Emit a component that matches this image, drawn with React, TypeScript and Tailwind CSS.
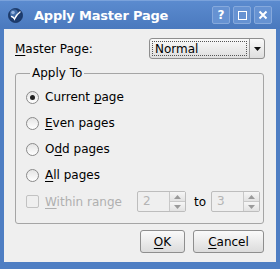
import { useState } from 'react';

const FONT = { fontFamily: '"DejaVu Sans", "Liberation Sans", sans-serif' };

function U({ children }: { children: string }) {
  return <span className="underline underline-offset-2">{children}</span>;
}

function Radio({ checked }: { checked: boolean }) {
  return (
    <span className="w-[13px] h-[13px] rounded-full border border-[#8a8a8a] bg-gradient-to-b from-[#e4e4e4] to-white flex items-center justify-center shrink-0">
      {checked && <span className="w-[5px] h-[5px] rounded-full bg-[#202020]" />}
    </span>
  );
}

function SpinBox({ value }: { value: string }) {
  return (
    <div className="w-[49px] h-[21px] border border-[#bdbdbd] rounded-[2px] bg-[#efefef] flex">
      <div className="flex-1 text-[12px] leading-[19px] text-[#b4b4b4] pl-[5px]">{value}</div>
      <div className="w-[16px] border-l border-[#c8c8c8] flex flex-col">
        <div className="flex-1 flex items-center justify-center border-b border-[#c8c8c8] bg-gradient-to-b from-[#f6f6f6] to-[#e2e2e2]">
          <svg width="7" height="4" viewBox="0 0 7 4"><path d="M0 4 L3.5 0 L7 4 Z" fill="#9a9a9a" /></svg>
        </div>
        <div className="flex-1 flex items-center justify-center bg-gradient-to-b from-[#f6f6f6] to-[#e2e2e2]">
          <svg width="7" height="4" viewBox="0 0 7 4"><path d="M0 0 L3.5 4 L7 0 Z" fill="#9a9a9a" /></svg>
        </div>
      </div>
    </div>
  );
}

export default function App() {
  const [choice, setChoice] = useState(0);
  const options: [string, string, string][] = [
    ['Current ', 'p', 'age'],
    ['', 'E', 'ven pages'],
    ['O', 'd', 'd pages'],
    ['', 'A', 'll pages'],
  ];

  return (
    <div className="w-[280px] h-[269px] bg-[#4e7ec3] flex flex-col text-black" style={FONT}>
      {/* Title bar */}
      <div className="h-[29px] shrink-0 flex items-center pl-[8px] pr-[8px] bg-gradient-to-b from-[#5b8bcf] to-[#4a79be] border-t border-[#7aa2db]">
        <svg width="15" height="15" viewBox="0 0 15 15" className="shrink-0">
          <circle cx="7.5" cy="7.5" r="7" fill="#1d3d70" stroke="#16305a" strokeWidth="0.8" />
          <circle cx="6" cy="5.5" r="4" fill="#4f7fbf" opacity="0.7" />
          <circle cx="5" cy="4.5" r="1.8" fill="#a9c6ee" opacity="0.8" />
          <path d="M3.5 8.5 Q5.5 9 6.5 11 Q8.5 6.5 12 4" stroke="#ffffff" strokeWidth="1.4" fill="none" strokeLinecap="round" />
        </svg>
        <span className="ml-[11px] text-white font-bold text-[13px] leading-none tracking-[-0.2px]">Apply Master Page</span>
        <div className="ml-auto flex gap-[3px]">
          {['?', 'max', 'x'].map(k => (
            <div key={k} className="w-[18px] h-[18px] rounded-[2px] border border-[#86a9dc] bg-[#6692d2] flex items-center justify-center text-white">
              {k === '?' && <span className="font-bold text-[12px] leading-none">?</span>}
              {k === 'max' && <span className="w-[9px] h-[9px] border-[1.5px] border-white" />}
              {k === 'x' && (
                <svg width="10" height="10" viewBox="0 0 10 10"><path d="M1.5 1.5 L8.5 8.5 M8.5 1.5 L1.5 8.5" stroke="#fff" strokeWidth="2" /></svg>
              )}
            </div>
          ))}
        </div>
      </div>

      {/* Body */}
      <div className="mx-[4px] h-[233px] bg-[#efefef] flex flex-col px-[11px] pt-[9px]">
        <div className="flex items-center h-[21px]">
          <span className="text-[12px]"><U>M</U>aster Page:</span>
          <div className="ml-auto w-[116px] h-[21px] border border-[#8e8e8e] rounded-[3px] bg-gradient-to-b from-[#fafafa] to-[#dedede] flex">
            <div className="flex-1 m-[2px] border border-dotted border-[#555] text-[12px] leading-[15px] pl-[2px]">Normal</div>
            <div className="w-[15px] border-l border-[#9a9a9a] flex items-center justify-center">
              <svg width="7" height="4" viewBox="0 0 7 4"><path d="M0 0 L3.5 4 L7 0 Z" fill="#111" /></svg>
            </div>
          </div>
        </div>

        <fieldset className="mt-[7px] border border-[#a5a5a5] rounded-[3px] pl-[10px] pr-[3px] pt-[4px] pb-[8px] mr-[1px]">
          <legend className="ml-[4px] px-[2px] text-[12px] leading-[14px]">Apply To</legend>
          {options.map(([a, u, b], i) => (
            <div key={i} className="h-[26px] flex items-center gap-[6px] text-[12px]" onClick={() => setChoice(i)}>
              <Radio checked={choice === i} />
              <span>{a}<U>{u}</U>{b}</span>
            </div>
          ))}
          <div className="h-[27px] flex items-center text-[12px]">
            <span className="w-[13px] h-[13px] border border-[#c2c2c2] rounded-[2px] bg-[#efefef] shrink-0" />
            <span className="ml-[6px] text-[#b0b0b0]"><U>W</U>ithin range</span>
            <div className="ml-auto flex items-center">
              <SpinBox value="2" />
              <span className="ml-[8px] mr-[5px] text-black">to</span>
              <SpinBox value="3" />
            </div>
          </div>
        </fieldset>

        <div className="mt-[6px] flex justify-end gap-[8px] mr-[1px]">
          <button className="w-[45px] h-[23px] border border-[#8e8e8e] rounded-[3px] bg-gradient-to-b from-[#fafafa] to-[#dcdcdc] text-[12px]"><U>O</U>K</button>
          <button className="w-[71px] h-[23px] border border-[#8e8e8e] rounded-[3px] bg-gradient-to-b from-[#fafafa] to-[#dcdcdc] text-[12px]"><U>C</U>ancel</button>
        </div>
      </div>
      <div className="flex-1" />
    </div>
  );
}
